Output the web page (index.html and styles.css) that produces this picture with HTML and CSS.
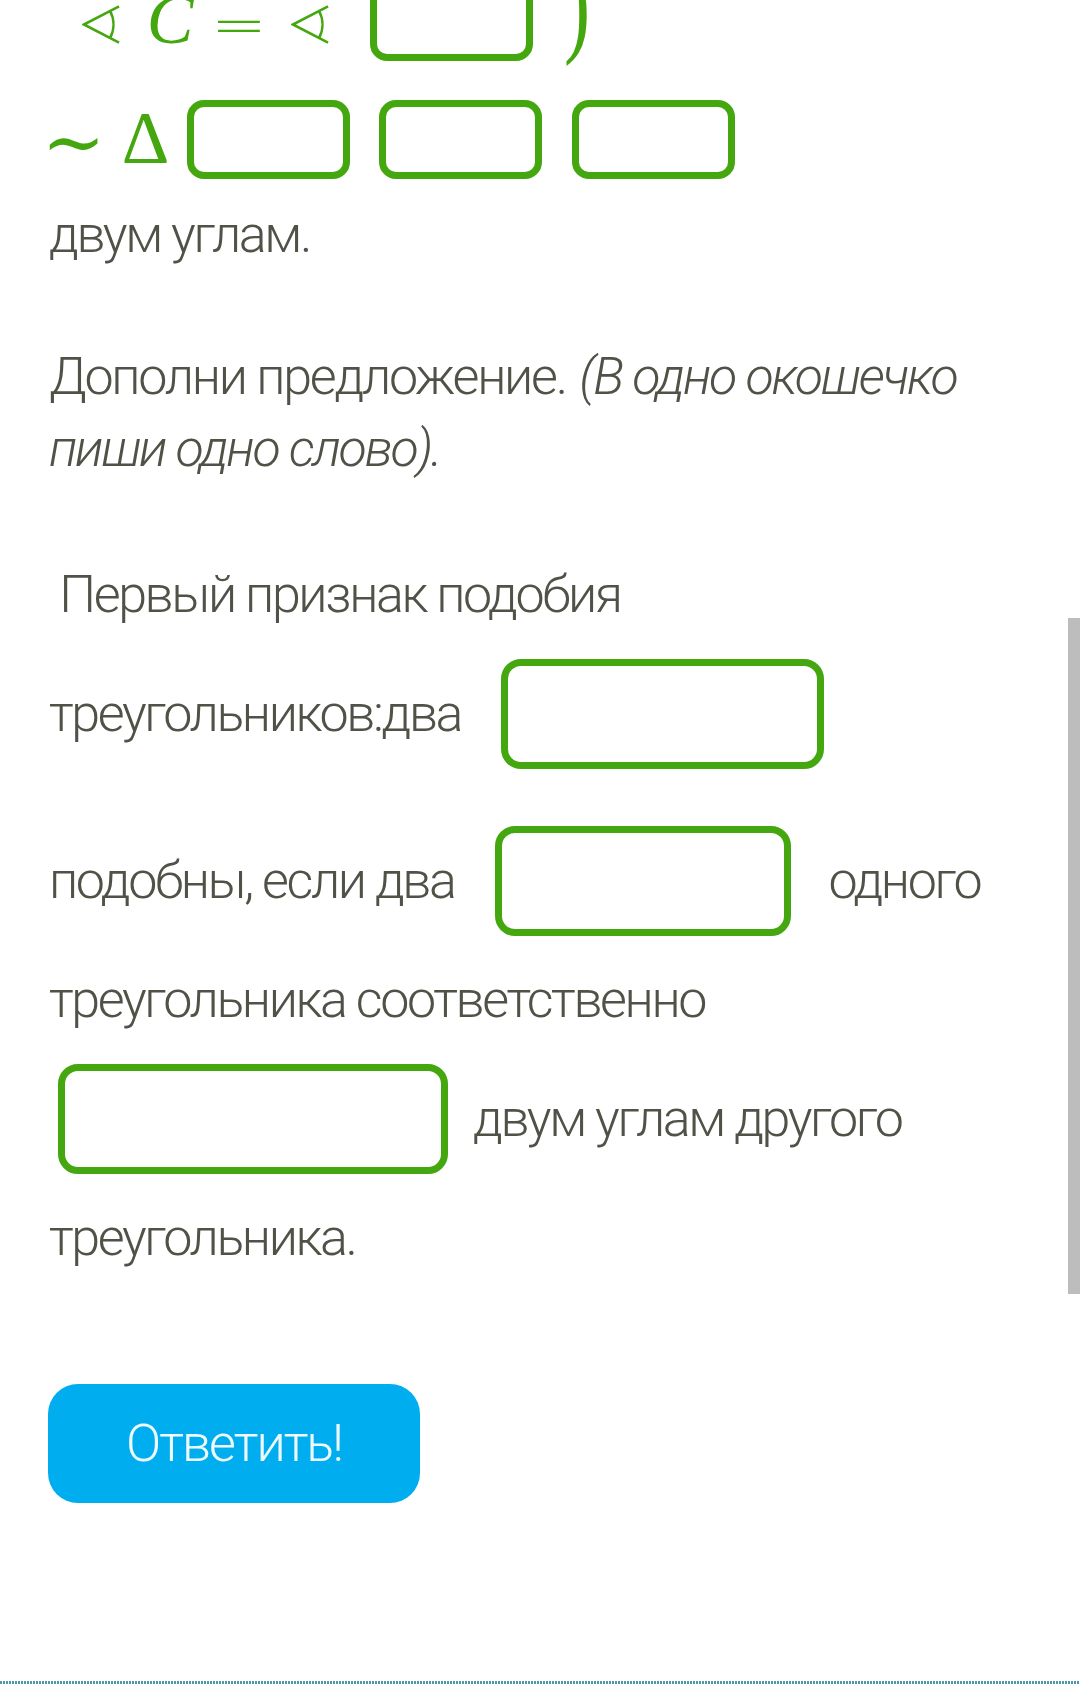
FILE: index.html
```html
<!DOCTYPE html>
<html lang="ru">
<head>
<meta charset="utf-8">
<title>Подобие треугольников</title>
<link rel="stylesheet" href="styles.css">
</head>
<body>
<main class="page">
  <div class="math-row math-row-1">
    <svg class="ang ang-1" viewBox="0 0 40 40" role="img" aria-label="угол"><path d="M38 1.5 L2 20 L38 38.5 M28.5 5.5 A30 30 0 0 1 28.5 34.5"/></svg>
    <span class="sym var">C</span>
    <span class="sym eq">=</span>
    <svg class="ang ang-2" viewBox="0 0 40 40" role="img" aria-label="угол"><path d="M38 1.5 L2 20 L38 38.5 M28.5 5.5 A30 30 0 0 1 28.5 34.5"/></svg>
    <span class="mbox mbox-wide"></span>
    <span class="sym paren">)</span>
  </div>
  <div class="math-row math-row-2">
    <span class="sym sim">∼</span>
    <span class="sym delta">Δ</span>
    <span class="mbox mbox-a"></span>
    <span class="mbox mbox-b"></span>
    <span class="mbox mbox-c"></span>
  </div>
  <p class="text-line">двум углам.</p>
  <p class="task">Дополни предложение. <em>(В одно окошечко пиши одно слово).</em></p>
  <div class="fill">
    <div class="row row-text">&nbsp;Первый признак подобия</div>
    <div class="row row-box"><span>треугольников:два</span><input class="inp inp-a" type="text" aria-label="ответ 1"></div>
    <div class="row row-box"><span>подобны, если два</span><input class="inp inp-b" type="text" aria-label="ответ 2"><span>одного</span></div>
    <div class="row row-text">треугольника соответственно</div>
    <div class="row row-box"><input class="inp inp-c" type="text" aria-label="ответ 3"><span>двум углам другого</span></div>
    <div class="row row-text">треугольника.</div>
  </div>
  <button class="btn" type="button">Ответить!</button>
</main>
<div class="dots"></div>
<div class="scrollbar"></div>
</body>
</html>
```
FILE: styles.css
```css
html, body {
  margin: 0;
  padding: 0;
  background: #ffffff;
}
body {
  width: 1080px;
  height: 1705px;
  overflow: hidden;
  position: relative;
  font-family: "Roboto Light", Roboto, "Noto Sans", "DejaVu Sans", sans-serif;
  font-weight: 300;
  font-size: 52px;
  letter-spacing: -2.4px;
  color: #505147;
}
.page {
  margin-top: -37px;
  padding-left: 49px;
  padding-right: 70px;
}

/* math rows */
.math-row {
  display: flex;
  align-items: center;
  color: #45a70f;
  letter-spacing: 0;
  font-family: "Liberation Serif", "DejaVu Serif", serif;
  font-weight: 400;
}
.math-row-1 { height: 117px; }
.math-row-2 { height: 119px; }
.sym {
  display: flex;
  justify-content: center;
  align-items: center;
  line-height: 1;
  flex: none;
}
.ang {
  flex: none;
  width: 39px;
  height: 39px;
  fill: none;
  stroke: #45a70f;
  stroke-width: 2.6;
  stroke-linejoin: miter;
  position: relative;
  top: 3px;
}
.ang-1 { margin-left: 33px; }
.var {
  width: 42px;
  font-style: italic;
  font-size: 70px;
  margin-left: 28px;
  position: relative;
  top: -2px;
}
.eq {
  width: 44px;
  font-family: "DejaVu Sans", sans-serif;
  font-weight: 300;
  font-size: 58px;
  margin-left: 26px;
  transform: scaleX(1.15);
  position: relative;
  top: 3px;
}
.ang-2 { margin-left: 30px; }
.mbox {
  box-sizing: border-box;
  flex: none;
  width: 163px;
  height: 79px;
  border: 7px solid #45a70f;
  border-radius: 17px;
  background: #fff;
}
.mbox-wide { margin-left: 40px; }
.paren {
  width: 22px;
  font-size: 112px;
  margin-left: 33px;
  transform: scaleX(0.7);
  position: relative;
  top: -18px;
}
.sim {
  width: 45px;
  font-family: "DejaVu Serif", serif;
  font-size: 76px;
  margin-left: 2px;
  position: relative;
  top: 2px;
}
.delta {
  width: 47px;
  font-size: 74px;
  margin-left: 26px;
  position: relative;
  top: -2px;
}
.mbox-a { margin-left: 18px; }
.mbox-b { margin-left: 29px; }
.mbox-c { margin-left: 30px; }

/* paragraphs */
.text-line {
  margin: 0;
  line-height: 72px;
}
.task {
  margin: 70px 0 0;
  line-height: 72px;
  letter-spacing: -2.25px;
}
.task em {
  font-style: italic;
  padding-left: 3px;
}
.fill {
  margin-top: 74px;
}
.row {
  display: flex;
  align-items: center;
  line-height: 71px;
  white-space: pre;
}
.row-text { height: 71px; }
.row-box { height: 167px; }
.inp {
  box-sizing: border-box;
  flex: none;
  height: 110px;
  border: 7px solid #45a70f;
  border-radius: 20px;
  background: #fff;
  padding: 0;
  margin: 0;
  outline: none;
  font: inherit;
}
.inp-a { width: 323px; margin-left: 40px; }
.inp-b { width: 296px; margin-left: 40px; margin-right: 38px; }
.inp-c { width: 390px; margin-left: 9px; margin-right: 25px; }

/* button */
.btn {
  display: block;
  margin-top: 111px;
  margin-left: -1px;
  width: 372px;
  height: 119px;
  border: none;
  border-radius: 30px;
  background: #00aeef;
  color: #eefaff;
  font-family: "Roboto Light", Roboto, "Noto Sans", sans-serif;
  font-weight: 300;
  font-size: 52px;
  letter-spacing: -2px;
  padding: 0;
}

/* footer dotted rule & scrollbar overlay */
.dots {
  position: absolute;
  left: 0;
  top: 1681px;
  width: 1080px;
  height: 3px;
  background: repeating-linear-gradient(90deg, #4f98ad 0 2px, transparent 2px 3px);
}
.scrollbar {
  position: absolute;
  right: 0;
  top: 618px;
  width: 12px;
  height: 676px;
  background: #bdbdbd;
}
```
